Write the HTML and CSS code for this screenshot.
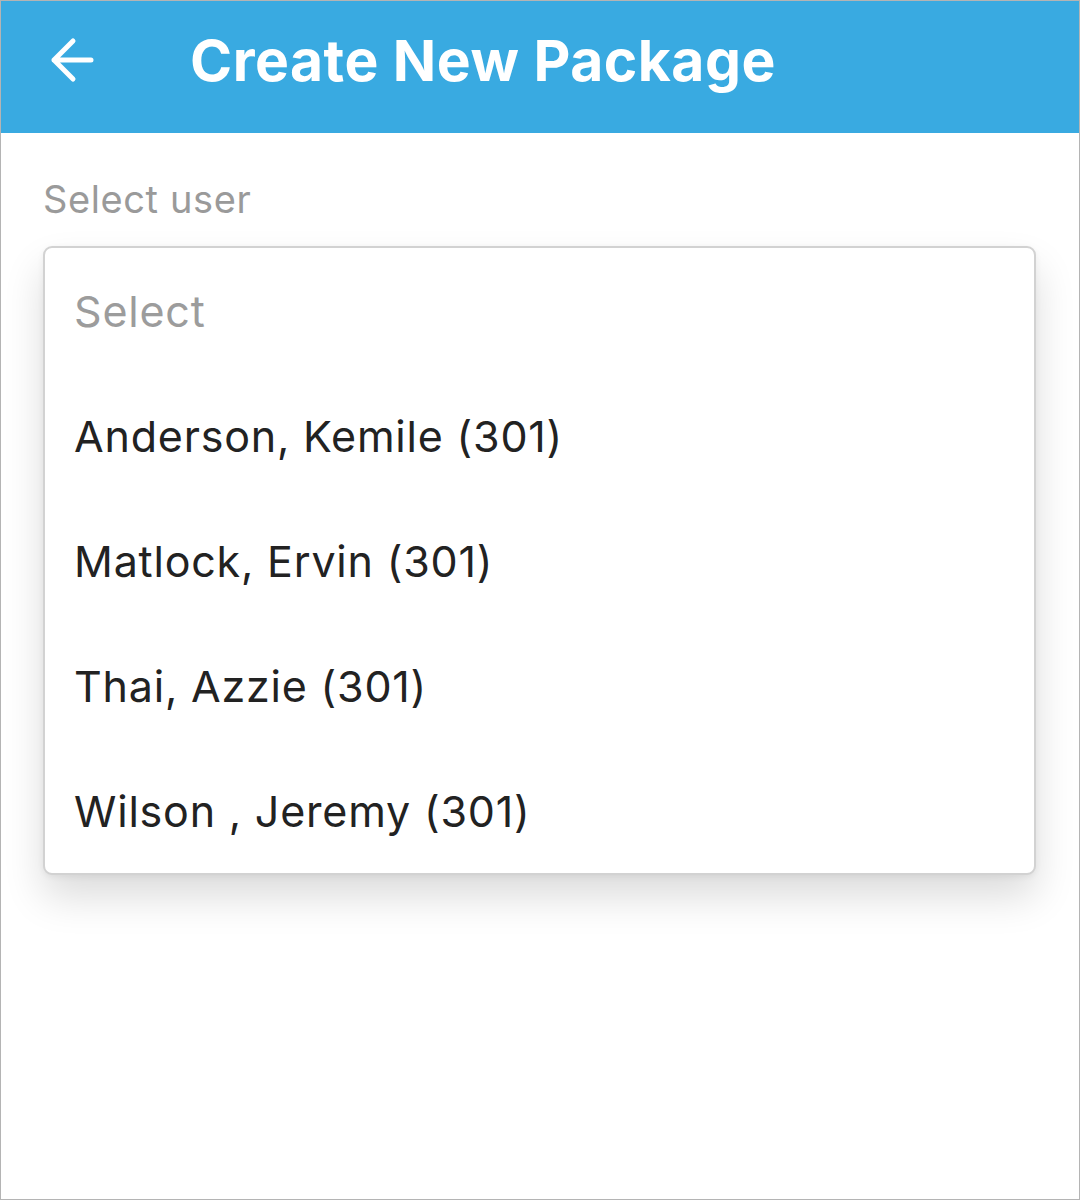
FILE: index.html
```html
<!DOCTYPE html>
<html>
<head>
<meta charset="utf-8">
<link rel="stylesheet" href="styles.css">
</head>
<body>
<div class="screen">
  <header class="appbar">
    <button class="back" aria-label="Back">
      <svg width="46" height="46" viewBox="0 0 46 46"><path d="M42 23H5M24 4L5 23l19 19" fill="none" stroke="#fff" stroke-width="5" stroke-linecap="round" stroke-linejoin="round"/></svg>
    </button>
    <h1 class="title">Create New Package</h1>
  </header>
  <main class="content">
    <div class="label">Select user</div>
    <ul class="dropdown">
      <li class="option placeholder">Select</li>
      <li class="option">Anderson, Kemile (301)</li>
      <li class="option">Matlock, Ervin (301)</li>
      <li class="option">Thai, Azzie (301)</li>
      <li class="option">Wilson , Jeremy (301)</li>
    </ul>
  </main>
</div>
</body>
</html>
```
FILE: styles.css
```css
html, body {
  margin: 0;
  padding: 0;
  background: #fff;
}
.screen {
  width: 1080px;
  height: 1200px;
  box-sizing: border-box;
  border: 1px solid #b4b4b4;
  font-family: Inter, "Noto Sans", sans-serif;
  overflow: hidden;
}
.appbar {
  height: 132px;
  box-sizing: border-box;
  padding-bottom: 14px;
  background: #39aae1;
  display: flex;
  align-items: center;
}
.back {
  background: none;
  border: none;
  padding: 0;
  margin-left: 48px;
  width: 46px;
  height: 46px;
  display: flex;
  align-items: center;
  justify-content: center;
}
.title {
  margin: 0 0 0 95px;
  color: #fff;
  font-size: 57px;
  font-weight: 700;
  letter-spacing: 0.5px;
}
.content {
  padding: 43px 43px 0 42px;
}
.label {
  color: #9a9a9a;
  font-size: 38px;
  line-height: 46px;
  letter-spacing: 0.6px;
}
.dropdown {
  list-style: none;
  margin: 24px 0 0 0;
  padding: 0;
  border: 2px solid #d2d2d2;
  border-radius: 9px;
  background: #fff;
  box-shadow: 0 22px 40px rgba(0,0,0,0.14), 0 2px 6px rgba(0,0,0,0.06);
}
.option {
  height: 125px;
  display: flex;
  align-items: center;
  padding-left: 29px;
  font-size: 43px;
  letter-spacing: 0.8px;
  color: #222;
}
.option.placeholder {
  color: #9c9c9c;
}
```
